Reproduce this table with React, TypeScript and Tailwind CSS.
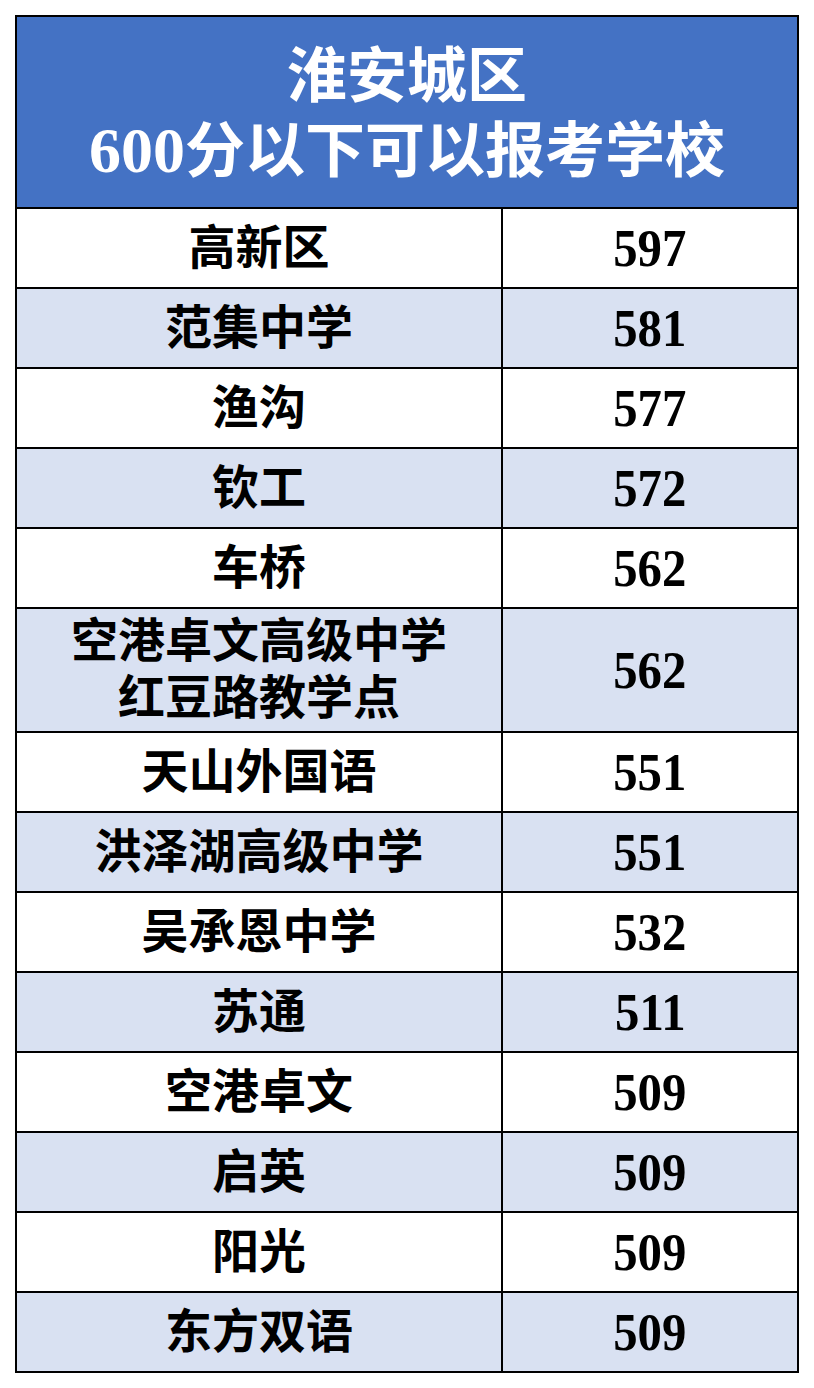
import React from "react";

const rows: { name: string[]; score: string; tall?: boolean }[] = [
  { name: ["高新区"], score: "597" },
  { name: ["范集中学"], score: "581" },
  { name: ["渔沟"], score: "577" },
  { name: ["钦工"], score: "572" },
  { name: ["车桥"], score: "562" },
  { name: ["空港卓文高级中学", "红豆路教学点"], score: "562", tall: true },
  { name: ["天山外国语"], score: "551" },
  { name: ["洪泽湖高级中学"], score: "551" },
  { name: ["吴承恩中学"], score: "532" },
  { name: ["苏通"], score: "511" },
  { name: ["空港卓文"], score: "509" },
  { name: ["启英"], score: "509" },
  { name: ["阳光"], score: "509" },
  { name: ["东方双语"], score: "509" },
];

const font = { fontFamily: '"Liberation Serif", "Noto Sans CJK SC", serif' };

export default function App() {
  return (
    <div className="w-[814px] h-[1388px] bg-white pt-[15px] pl-[15px]" style={font}>
      <div className="w-[784px] bg-black p-[2px] flex flex-col gap-[2px]">
        <div className="h-[190px] bg-[#4472c4] flex flex-col items-center justify-center text-white font-bold text-[60px] leading-[74px] pt-[4px]">
          <div>淮安城区</div>
          <div>
            <span className="inline-block text-[64px]">600</span>分以下可以报考学校
          </div>
        </div>
        {rows.map((r, i) => (
          <div
            key={i}
            className={`grid grid-cols-[484px_1fr] gap-[2px] ${r.tall ? "h-[122px]" : "h-[78px]"}`}
          >
            <div
              className={`flex flex-col items-center justify-center text-black font-bold text-[47px] ${r.tall ? "leading-[57px]" : "leading-[56px]"} ${i % 2 === 1 ? "bg-[#d9e1f2]" : "bg-white"}`}
            >
              {r.name.map((n, j) => (
                <div key={j}>{n}</div>
              ))}
            </div>
            <div
              className={`flex items-center justify-center text-black font-bold text-[53px] leading-none ${i % 2 === 1 ? "bg-[#d9e1f2]" : "bg-white"}`}
            >
              <span className="inline-block scale-x-[0.92]">{r.score}</span>
            </div>
          </div>
        ))}
      </div>
    </div>
  );
}
